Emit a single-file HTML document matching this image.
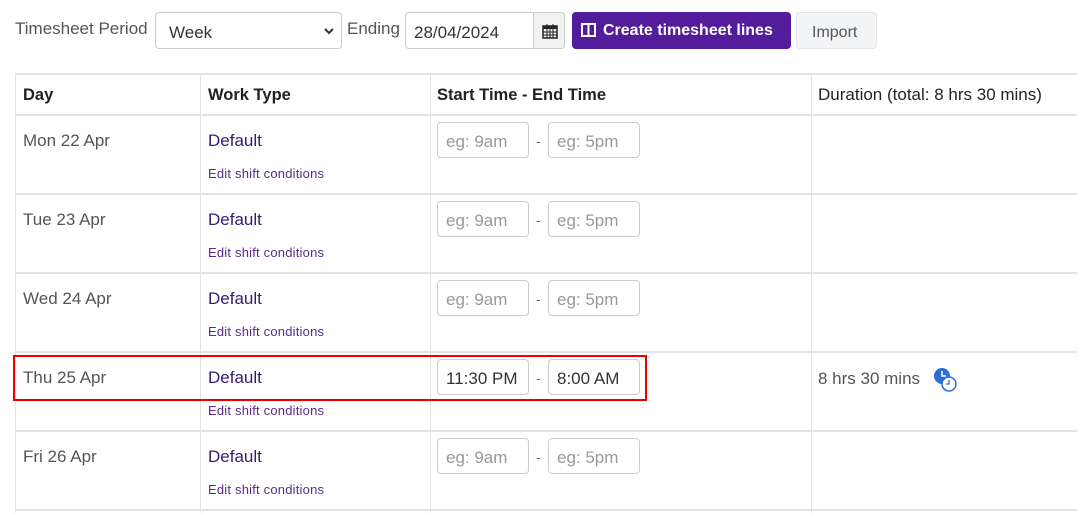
<!DOCTYPE html>
<html><head><style>
*{box-sizing:border-box;margin:0;padding:0}
body{width:1077px;height:513px;overflow:hidden;background:#fff;font-family:"Liberation Sans",sans-serif;color:#444;position:relative}
.a{position:absolute}
.lbl{font-size:17px;color:#555}
.box{border:1px solid #ccc;border-radius:4px;background:#fff}
.hl{position:absolute;left:15px;width:1062px;height:2px;background:#e3e3e3}
.vl{position:absolute;width:1px;background:#e3e3e3;top:74px;height:439px}
.th{position:absolute;top:85px;height:20px;line-height:20px;font-size:16.5px;font-weight:bold;color:#222}
.day{position:absolute;left:23px;font-size:17px;color:#555}
.wt{position:absolute;left:208px;font-size:17px;color:#3a1a6e}
.esc{position:absolute;left:208px;font-size:13px;letter-spacing:0.2px;color:#5b2a8a}
.in{position:absolute;width:92px;height:36px;border:1px solid #ccc;border-radius:4px;font-size:17px;color:#999;padding:9px 0 0 8px}
.dash{position:absolute;left:536px;font-size:14px;color:#666}
</style></head><body>
<div class="a lbl" style="left:15px;top:19px">Timesheet Period</div>
<div class="a box" style="left:155px;top:12px;width:187px;height:37px;font-size:17px;color:#333;padding:10px 0 0 13px">Week
<svg class="a" style="right:6px;top:14px" width="12" height="8" viewBox="0 0 12 8"><path d="M2 2l4 4 4-4" stroke="#333" stroke-width="2" fill="none"/></svg></div>
<div class="a lbl" style="left:347px;top:19px">Ending</div>
<div class="a box" style="left:405px;top:12px;width:160px;height:37px;font-size:17px;color:#333;padding:10px 0 0 8px">28/04/2024</div>
<div class="a" style="left:533px;top:12px;width:32px;height:37px;border:1px solid #ccc;border-radius:0 4px 4px 0;background:#f1f1f1">
<svg class="a" style="left:8px;top:10px" width="16" height="16" viewBox="0 0 16 16"><rect x="1" y="3" width="14" height="12" fill="none" stroke="#222" stroke-width="1.5"/><rect x="1" y="3" width="14" height="3" fill="#222"/><path d="M5 1v4M11 1v4M1 9h14M1 12h14M5 6v9M8 6v9M11 6v9" stroke="#222" stroke-width="1"/></svg></div>
<div class="a" style="left:572px;top:12px;width:219px;height:37px;background:#531c9a;border-radius:4px;color:#fff;font-size:16px;font-weight:bold;padding:10px 0 0 31px">Create timesheet lines
<svg class="a" style="left:9px;top:11px" width="15" height="14" viewBox="0 0 15 14"><rect x="1" y="1" width="13" height="12" fill="none" stroke="#fff" stroke-width="2"/><path d="M7.5 1v12" stroke="#fff" stroke-width="2"/></svg></div>
<div class="a" style="left:796px;top:12px;width:81px;height:37px;background:#f3f4f6;border:1px solid #e5e5e5;border-radius:4px;font-size:16px;color:#555;padding:11px 0 0 15px">Import</div>

<div class="hl" style="top:73px"></div>
<div class="hl" style="top:114px"></div>
<div class="hl" style="top:193px"></div>
<div class="hl" style="top:272px"></div>
<div class="hl" style="top:351px"></div>
<div class="hl" style="top:430px"></div>
<div class="hl" style="top:509px"></div>
<div class="vl" style="left:15px"></div>
<div class="vl" style="left:200px"></div>
<div class="vl" style="left:430px"></div>
<div class="vl" style="left:811px"></div>

<div class="th" style="left:23px">Day</div>
<div class="th" style="left:208px">Work Type</div>
<div class="th" style="left:437px">Start Time - End Time</div>
<div class="th" style="left:818px;font-weight:normal;font-size:17px">Duration (total: 8 hrs 30 mins)</div>

<div class="day" style="top:131px">Mon 22 Apr</div><div class="wt" style="top:131px">Default</div><div class="esc" style="top:166px">Edit shift conditions</div>
<div class="in" style="left:437px;top:122px">eg: 9am</div><div class="dash" style="top:133px">-</div><div class="in" style="left:548px;top:122px">eg: 5pm</div>

<div class="day" style="top:210px">Tue 23 Apr</div><div class="wt" style="top:210px">Default</div><div class="esc" style="top:245px">Edit shift conditions</div>
<div class="in" style="left:437px;top:201px">eg: 9am</div><div class="dash" style="top:212px">-</div><div class="in" style="left:548px;top:201px">eg: 5pm</div>

<div class="day" style="top:289px">Wed 24 Apr</div><div class="wt" style="top:289px">Default</div><div class="esc" style="top:324px">Edit shift conditions</div>
<div class="in" style="left:437px;top:280px">eg: 9am</div><div class="dash" style="top:291px">-</div><div class="in" style="left:548px;top:280px">eg: 5pm</div>

<div class="day" style="top:368px">Thu 25 Apr</div><div class="wt" style="top:368px">Default</div><div class="esc" style="top:403px">Edit shift conditions</div>
<div class="in" style="left:437px;top:359px;color:#333">11:30 PM</div><div class="dash" style="top:370px">-</div><div class="in" style="left:548px;top:359px;color:#333">8:00 AM</div>
<div class="a" style="left:13px;top:355px;width:634px;height:46px;border:2px solid #e00"></div>
<div class="a" style="left:818px;top:369px;font-size:17px;color:#555">8 hrs 30 mins</div>
<svg class="a" style="left:932px;top:367px" width="28" height="26" viewBox="0 0 28 26"><circle cx="10" cy="9" r="8" fill="#2a6fd6"/><path d="M10 4v5h4" stroke="#fff" stroke-width="1.5" fill="none"/><circle cx="17" cy="17" r="7" fill="#fff" stroke="#2a6fd6" stroke-width="1.5"/><path d="M17 13v4h-3" stroke="#2a6fd6" stroke-width="1.3" fill="none"/></svg>

<div class="day" style="top:447px">Fri 26 Apr</div><div class="wt" style="top:447px">Default</div><div class="esc" style="top:482px">Edit shift conditions</div>
<div class="in" style="left:437px;top:438px">eg: 9am</div><div class="dash" style="top:449px">-</div><div class="in" style="left:548px;top:438px">eg: 5pm</div>
</body></html>
